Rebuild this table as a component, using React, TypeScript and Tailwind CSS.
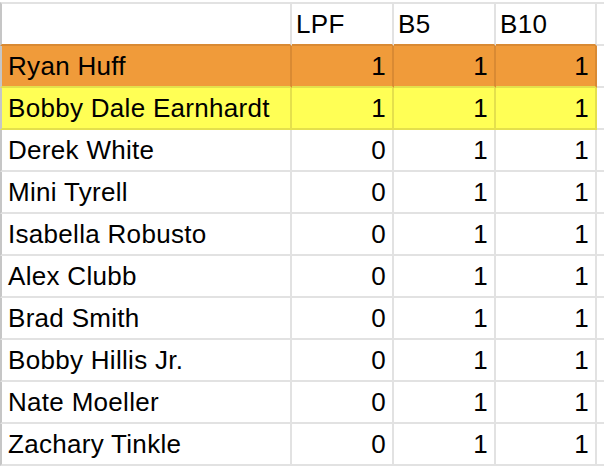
const riders = [
  { name: "Ryan Huff", lpf: 1, b5: 1, b10: 1, tone: "orange" },
  { name: "Bobby Dale Earnhardt", lpf: 1, b5: 1, b10: 1, tone: "yellow" },
  { name: "Derek White", lpf: 0, b5: 1, b10: 1 },
  { name: "Mini Tyrell", lpf: 0, b5: 1, b10: 1 },
  { name: "Isabella Robusto", lpf: 0, b5: 1, b10: 1 },
  { name: "Alex Clubb", lpf: 0, b5: 1, b10: 1 },
  { name: "Brad Smith", lpf: 0, b5: 1, b10: 1 },
  { name: "Bobby Hillis Jr.", lpf: 0, b5: 1, b10: 1 },
  { name: "Nate Moeller", lpf: 0, b5: 1, b10: 1 },
  { name: "Zachary Tinkle", lpf: 0, b5: 1, b10: 1 },
];

// fill + gridline colour for highlighted rows
const tones: Record<string, string> = {
  orange: "bg-[#f09b3a] border-[#d98a33] border-b-[#e4e04c]",
  yellow: "bg-[#ffff55] border-[#e4e04c]",
  plain: "bg-white border-[#e2e2e2]",
};

function Row({ cells, tone, header }: { cells: (string | number)[]; tone: string; header?: boolean }) {
  const c = tones[tone];
  const top = header ? "border-t-2 border-t-[#e2e2e2]" : "";
  // header's bottom line takes the orange row's tint
  const bottom = header ? "border-b-[#d98a33]" : "";
  return (
    <div className="flex h-[42px] first:h-[44px]">
      <div className={`flex w-[292px] shrink-0 items-center border-l-2 border-r-2 border-b-2 border-l-[#c6c6c6] pl-[6px] ${c} ${top} ${bottom}`}>
        {cells[0]}
      </div>
      {cells.slice(1).map((v, i) => (
        <div
          key={i}
          className={`flex shrink-0 items-center border-r-2 border-b-2 ${i === 2 ? "w-[101px]" : "w-[102px]"} ${header ? "justify-start pl-[4px]" : "justify-end pr-[6px]"} ${c} ${top} ${bottom}`}
        >
          {v}
        </div>
      ))}
      <div className={`flex-1 border-b-2 border-[#e2e2e2] bg-white ${top}`} />
    </div>
  );
}

export default function App() {
  return (
    <div
      className="h-[468px] w-[604px] overflow-hidden bg-white pt-[2px] text-[26px] leading-[30px] tracking-[0.3px] text-black"
      style={{ fontFamily: '"Liberation Sans", Arial, sans-serif' }}
    >
      <Row cells={["", "LPF", "B5", "B10"]} tone="plain" header />
      {riders.map((r) => (
        <Row key={r.name} cells={[r.name, r.lpf, r.b5, r.b10]} tone={r.tone ?? "plain"} />
      ))}
    </div>
  );
}
